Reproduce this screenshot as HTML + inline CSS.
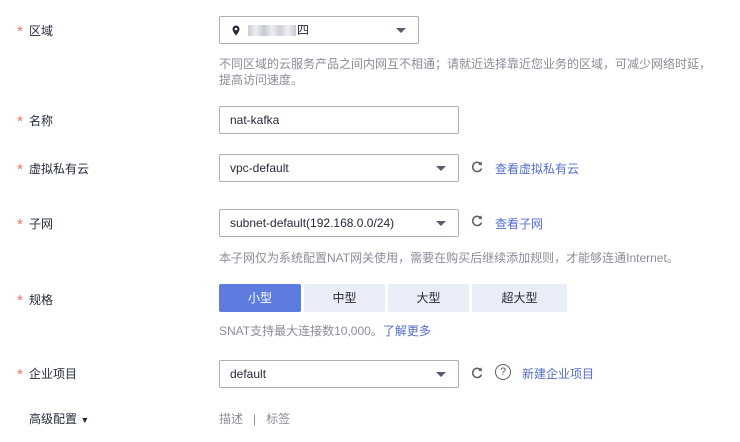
<!DOCTYPE html><html><head><meta charset="utf-8"><style>
body{margin:0;width:740px;height:442px;background:#fff;font-family:"Liberation Sans","Noto Sans CJK SC",sans-serif;font-size:12px;color:#252b3a;position:relative;overflow:hidden}
.a{position:absolute;white-space:nowrap}
.lbl{font-size:12px;color:#252b3a}
.lbl b{position:absolute;left:0;top:1px;color:#f66f6a;font-weight:normal;font-size:15px}
.lbl span{margin-left:12px}
.box{position:absolute;border:1px solid #adb0b8;border-radius:2px;box-sizing:border-box;height:28px;line-height:26px;padding-left:10px;font-size:12px}
.tri{position:absolute;right:12px;top:11px;width:0;height:0;border-left:5px solid transparent;border-right:5px solid transparent;border-top:5px solid #575d6c}
.hint{color:#8a8e99;font-size:12px}
.link{color:#526ecc}
.btn{position:absolute;top:284px;height:28px;line-height:28px;text-align:center;background:#e8edf8;color:#252b3a;border-radius:2px}
.rf{position:absolute;width:12px;height:12px}
</style></head><body>
<div class="a lbl" style="left:17px;top:22px"><b>*</b><span>区域</span></div>
<div class="box" style="left:219px;top:16px;width:200px"><svg style="position:absolute;left:12px;top:8px" width="8" height="11" viewBox="0 0 8 11"><path d="M4 0.5a3.5 3.5 0 0 1 3.5 3.5c0 2.5-3.5 6.5-3.5 6.5S0.5 6.5 0.5 4A3.5 3.5 0 0 1 4 0.5z" fill="#252b3a"/><circle cx="4" cy="4" r="1.3" fill="#fff"/></svg><span style="position:absolute;left:28px;top:8px;width:48px;height:11px;background:linear-gradient(90deg,#c9cdd4,#eceef2,#c4c8d0,#eceef2,#cdd0d6,#eef0f3,#c6c9cf)"></span><span style="position:absolute;left:77px">四</span><div class="tri"></div></div>
<div class="a hint" style="left:219px;top:55px">不同区域的云服务产品之间内网互不相通；请就近选择靠近您业务的区域，可减少网络时延，</div>
<div class="a hint" style="left:219px;top:71px">提高访问速度。</div>

<div class="a lbl" style="left:17px;top:112px"><b>*</b><span>名称</span></div>
<div class="box" style="left:219px;top:106px;width:240px">nat-kafka</div>

<div class="a lbl" style="left:17px;top:160px"><b>*</b><span>虚拟私有云</span></div>
<div class="box" style="left:219px;top:154px;width:240px">vpc-default<div class="tri"></div></div>
<svg class="rf" style="left:471px;top:161px" viewBox="0 0 12 12"><path d="M10 3.2A4.6 4.6 0 1 0 10.6 7.5" fill="none" stroke="#575d6c" stroke-width="1.5"/><path d="M7.2 3.6L11 4.2 10.6 0.4z" fill="#575d6c"/></svg>
<div class="a link" style="left:495px;top:160px">查看虚拟私有云</div>

<div class="a lbl" style="left:17px;top:215px"><b>*</b><span>子网</span></div>
<div class="box" style="left:219px;top:209px;width:240px">subnet-default(192.168.0.0/24)<div class="tri"></div></div>
<svg class="rf" style="left:471px;top:215px" viewBox="0 0 12 12"><path d="M10 3.2A4.6 4.6 0 1 0 10.6 7.5" fill="none" stroke="#575d6c" stroke-width="1.5"/><path d="M7.2 3.6L11 4.2 10.6 0.4z" fill="#575d6c"/></svg>
<div class="a link" style="left:495px;top:215px">查看子网</div>
<div class="a hint" style="left:219px;top:249px">本子网仅为系统配置NAT网关使用，需要在购买后继续添加规则，才能够连通Internet。</div>

<div class="a lbl" style="left:17px;top:291px"><b>*</b><span>规格</span></div>
<div class="btn" style="left:219px;width:82px;background:#5e7ce0;color:#fff">小型</div>
<div class="btn" style="left:304px;width:81px">中型</div>
<div class="btn" style="left:388px;width:81px">大型</div>
<div class="btn" style="left:472px;width:95px">超大型</div>
<div class="a hint" style="left:219px;top:322px">SNAT支持最大连接数10,000。<span class="link">了解更多</span></div>

<div class="a lbl" style="left:17px;top:365px"><b>*</b><span>企业项目</span></div>
<div class="box" style="left:219px;top:360px;width:240px">default<div class="tri"></div></div>
<svg class="rf" style="left:471px;top:367px" viewBox="0 0 12 12"><path d="M10 3.2A4.6 4.6 0 1 0 10.6 7.5" fill="none" stroke="#575d6c" stroke-width="1.5"/><path d="M7.2 3.6L11 4.2 10.6 0.4z" fill="#575d6c"/></svg>
<div class="a" style="left:495px;top:364px;width:14px;height:14px;border:1.3px solid #575d6c;border-radius:50%;text-align:center;line-height:14px;font-size:11px;color:#575d6c">?</div>
<div class="a link" style="left:522px;top:365px">新建企业项目</div>

<div class="a" style="left:29px;top:410px">高级配置 <span style="font-size:9px">▼</span></div>
<div class="a hint" style="left:219px;top:410px">描述 &nbsp; | &nbsp; 标签</div>
</body></html>
